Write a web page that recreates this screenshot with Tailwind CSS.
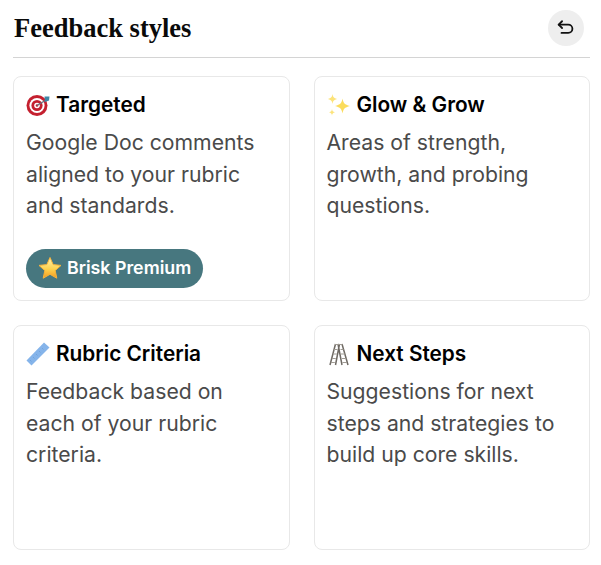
<!DOCTYPE html>
<html>
<head>
<meta charset="utf-8">
<script src="https://cdn.jsdelivr.net/npm/@tailwindcss/browser@4"></script>
</head>
<body class="bg-white font-['Inter',sans-serif]">
<div class="w-[601px] h-[565px] pl-[13px] pr-[11px] overflow-hidden">
  <header class="h-[58px] border-b border-[#d4d4d4] flex items-center justify-between pr-[6px]">
    <h1 class="font-['Liberation_Serif',serif] font-bold text-[26.5px] text-[#0a0a0a] pl-px">Feedback styles</h1>
    <button class="w-9 h-9 rounded-full bg-[#eeeeee] flex items-center justify-center mb-[2px]">
      <svg width="18" height="18" viewBox="0 0 16 16" fill="none" stroke="#111" stroke-width="1.600" stroke-linecap="round" stroke-linejoin="round"><path d="M4.500 2 1.500 5l3 3"/><path d="M1.500 5h8.500a3.600 3.600 0 0 1 0 7.400H4"/></svg>
    </button>
  </header>
  <div class="grid grid-cols-2 gap-x-6 gap-y-6 mt-[18px]">
    <section class="h-[225px] rounded-lg border border-[#e8e8e8] px-3 pt-[14px] flex flex-col">
      <h2 class="flex items-center gap-[6px] text-[20.8px] leading-7 font-semibold text-black">
        <svg width="24" height="24" viewBox="0 0 24 24"><circle cx="11" cy="12.500" r="10.500" fill="#c4202f"/><circle cx="11" cy="12.500" r="7.600" fill="#fff"/><circle cx="11" cy="12.500" r="5.600" fill="#c4202f"/><circle cx="11" cy="12.500" r="2.800" fill="#fff"/><circle cx="11" cy="12.500" r="1.300" fill="#c4202f"/><path d="M11 12.500 20 7" stroke="#6b7280" stroke-width="1.400"/><path d="M18.500 3.500h5L23 7.500l-4 1.500z" fill="#3f87a6"/></svg>
        Targeted
      </h2>
      <p class="mt-2 text-[21.2px] leading-[31.5px] text-[#4a4a4a]">Google Doc comments aligned to your rubric and standards.</p>
      <span class="mt-[27px] self-start h-[39px] rounded-full bg-[#47777f] pl-[11px] pr-3 flex items-center gap-[4px] text-[17.8px] font-semibold text-white">
        <svg width="26" height="26" viewBox="0 0 26 26"><defs><linearGradient id="s" x1="0" y1="0" x2="0" y2="1"><stop offset="0" stop-color="#fff3b0"/><stop offset="0.55" stop-color="#fdd34f"/><stop offset="1" stop-color="#f49b1e"/></linearGradient></defs><path d="M13 2.500 16.200 9.600 24 10.400 18.200 15.600 19.800 23.200 13 19.300 6.200 23.200 7.800 15.600 2 10.400 9.800 9.600Z" fill="url(#s)" stroke="#f6b23a" stroke-width="1" stroke-linejoin="round"/></svg>
        Brisk Premium
      </span>
    </section>
    <section class="h-[225px] rounded-lg border border-[#e8e8e8] px-3 pt-[14px] flex flex-col">
      <h2 class="flex items-center gap-[6px] text-[20.8px] leading-7 font-semibold text-black">
        <svg width="24" height="24" viewBox="0 0 24 24" fill="#fbdc5c"><path d="M15.500 5.500C16.300 10 17.500 11.600 23 13 17.500 14.400 16.300 16 15.500 20.500 14.700 16 13.500 14.400 8 13 13.500 11.600 14.700 10 15.500 5.500Z"/><path d="M5.500 1C6 4 6.800 5 10 6 6.800 7 6 8 5.500 11 5 8 4.200 7 1 6 4.200 5 5 4 5.500 1Z" fill="#fce37a"/><path d="M5 16C5.300 18 5.800 18.600 8 19.300 5.800 20 5.300 20.600 5 22.800 4.700 20.600 4.200 20 2 19.300 4.200 18.600 4.700 18 5 16Z" fill="#fce37a"/></svg>
        Glow &amp; Grow
      </h2>
      <p class="mt-2 text-[21.2px] leading-[31.5px] text-[#4a4a4a]">Areas of strength, growth, and probing questions.</p>
    </section>
    <section class="h-[225px] rounded-lg border border-[#e8e8e8] px-3 pt-[14px] flex flex-col">
      <h2 class="flex items-center gap-[6px] text-[20.8px] leading-7 font-semibold text-black">
        <svg width="24" height="24" viewBox="0 0 24 24"><path d="M18 0.500 23.500 5.500 5.500 23.500 0.500 18.500Z" fill="#85b4ea"/><path d="M16 6l1.500 1.500M13 9l1.500 1.500M10 12l1.500 1.500M7 15l1.500 1.500M4 18l1.500 1.500" stroke="#6d9fd8" stroke-width="0.800"/></svg>
        Rubric Criteria
      </h2>
      <p class="mt-2 text-[21.2px] leading-[31.5px] text-[#4a4a4a]">Feedback based on each of your rubric criteria.</p>
    </section>
    <section class="h-[225px] rounded-lg border border-[#e8e8e8] px-3 pt-[14px] flex flex-col">
      <h2 class="flex items-center gap-[6px] text-[20.8px] leading-7 font-semibold text-black">
        <svg width="24" height="24" viewBox="0 0 24 24" fill="none" stroke="#6f6a64" stroke-width="1.500"><path d="M8.500 2 3 23M12.500 2 8.500 23M11 2 15 23M15 2 21 23"/><path d="M8 2.500h7.500M7 7.500h3.500M13.500 7.500h3M5.800 12h4M14 12h4M4.800 16.500h4M15 16.500h4.300M3.800 20.500h4M15.500 20.500h4.500" stroke="#a09b94" stroke-width="1.200"/></svg>
        Next Steps
      </h2>
      <p class="mt-2 text-[21.2px] leading-[31.5px] text-[#4a4a4a]">Suggestions for next steps and strategies to build up core skills.</p>
    </section>
  </div>
</div>
</body>
</html>
